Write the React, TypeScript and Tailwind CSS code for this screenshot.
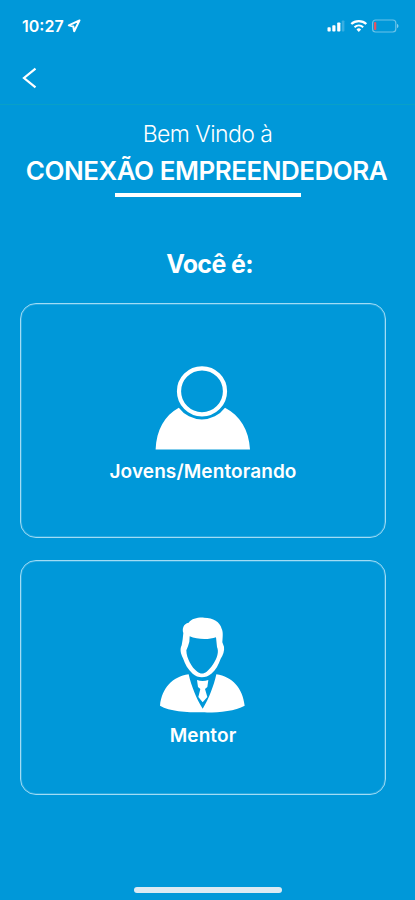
import type { ReactNode } from "react";

function LocationArrow() {
  return (
    <svg width="14" height="14" viewBox="0 0 14 14" className="ml-[3px] block" fill="none">
      <path d="M12.5 1.400 1.800 6.400l4.500 1.100.9 4.700z" stroke="white" strokeWidth="2" strokeLinejoin="round" />
    </svg>
  );
}

function StatusIcons() {
  return (
    <svg width="74" height="16" viewBox="0 0 74 16" className="block" fill="none">
      <rect x="2.500" y="9.200" width="3.200" height="4.400" rx=".8" fill="white" />
      <rect x="7.300" y="7.300" width="3.200" height="6.300" rx=".8" fill="white" />
      <rect x="12.200" y="4.400" width="3.200" height="9.200" rx=".8" fill="white" />
      <rect x="16.800" y="2.400" width="2.600" height="11.200" rx=".8" fill="white" fillOpacity=".22" />
      <path d="M26.300 6c4-3.800 11-3.800 15 0" stroke="white" strokeWidth="2.300" />
      <path d="M29.500 9.200c2.500-2.200 6.200-2.200 8.700 0" stroke="white" strokeWidth="2" />
      <path d="M31.500 11.400a3.400 3.400 0 0 1 4.600 0L33.800 14z" fill="white" />
      <rect x="47.600" y="2" width="23.200" height="12" rx="3" stroke="white" strokeOpacity=".42" strokeWidth="1.200" />
      <rect x="49" y="4" width="2.300" height="8" rx="1" fill="#e65360" />
      <path d="M72 5.800v4.400c2-.8 2-3.600 0-4.400z" fill="white" fillOpacity=".5" />
    </svg>
  );
}

function YoungIcon() {
  return (
    <svg width="96" height="86" viewBox="0 0 96 86" className="mr-[2px] block" fill="none">
      <circle cx="48" cy="27.300" r="23" stroke="white" strokeWidth="4.200" />
      <path d="M24.800 43.800A28.800 28.800 0 0 0 71 43.800C86 51.500 95 66 96 85.500H1.600C2.500 66 10.500 51.500 24.800 43.800z" fill="white" />
    </svg>
  );
}

function MentorIcon() {
  return (
    <svg width="86" height="98" viewBox="0 0 258 294" className="block" fill="none">
      <path
        fill="white"
        fillRule="evenodd"
        d="M70 54C66 41 70 26 86 23C96 11 112 7 132 8C160 8 180 21 185 41C190 50 188 66 187 82L192 95C194 107 189 121 182 131C176 149 167 165 154 176C137 190 114 190 98 176C84 164 75 148 69 130C62 116 59 103 65 91L68 73ZM89 64L88 80L84 94L79 106C79 119 84 132 89 142C95 154 103 164 112 170C121 177 131 177 140 170C149 163 159 150 165 138C172 126 177 109 171 96L168 67C146 75 111 74 89 64Z"
      />
      <path
        fill="white"
        d="M86 178C94 213 109 251 128 281C147 251 161 213 169 178C217 186 248 218 254 272C223 290 169 293 127 292C77 292 29 289 0 272C6 219 37 185 86 178Z"
      />
      <path fill="white" d="M111 195Q128 201 145 195L142 216L135 222L142 246L128 262L115 246L121 222L114 216Z" />
    </svg>
  );
}

function RoleCard({ icon, label, className }: { icon: ReactNode; label: string; className: string }) {
  return (
    <button className={`flex w-[366px] flex-col items-center rounded-[16px] border border-[#a0dcf5] shadow-[inset_0_0_0_1px_#2ba9df] ${className}`}>
      {icon}
      <span className="whitespace-nowrap text-[19px] leading-6 font-semibold tracking-[0.1px]">{label}</span>
    </button>
  );
}

export default function App() {
  return (
    <div className="flex h-[900px] w-[415px] flex-col overflow-hidden bg-[#0098d9] font-[Inter,sans-serif] text-white">
      <header className="h-[105px] shrink-0 border-b border-[#08a0c8]">
        <div className="flex h-[52px] items-center pl-[22px] pr-[16px]">
          <span className="text-[16px] leading-5 font-semibold">10:27</span>
          <LocationArrow />
          <div className="ml-auto"><StatusIcons /></div>
        </div>
        <button aria-label="Voltar" className="ml-[22px] mt-[15px] block">
          <svg width="16" height="22" viewBox="0 0 16 22" fill="none">
            <path d="M13.500 1.700 2 11l11.500 9.300" stroke="white" strokeWidth="2.200" />
          </svg>
        </button>
      </header>
      <main className="flex flex-1 flex-col items-center">
        <p className="mt-[14px] whitespace-nowrap text-[23px] leading-[30px] font-[350] tracking-[-0.55px]">Bem Vindo à</p>
        <h1 className="mt-[6px] mr-[2px] whitespace-nowrap text-[26px] leading-8 font-semibold tracking-[-0.48px]">CONEXÃO EMPREENDEDORA</h1>
        <div className="mt-[6px] ml-px h-[4px] w-[186px] bg-white" />
        <h2 className="mt-[51px] ml-[4px] whitespace-nowrap text-[25px] leading-8 font-bold tracking-[-0.65px]">Você é:</h2>
        <div className="mt-[23px] flex w-full flex-col gap-[22px] pl-[20px]">
          <RoleCard icon={<YoungIcon />} label="Jovens/Mentorando" className="h-[235px] pt-[60px] [&>span]:mt-[10px]" />
          <RoleCard icon={<MentorIcon />} label="Mentor" className="h-[235px] pt-[54px] [&>span]:mt-[11px]" />
        </div>
      </main>
      <footer className="flex h-[13px] shrink-0 justify-center pl-[1px]">
        <div className="h-[6px] w-[148px] rounded-full bg-[#dceaf3]" />
      </footer>
    </div>
  );
}
